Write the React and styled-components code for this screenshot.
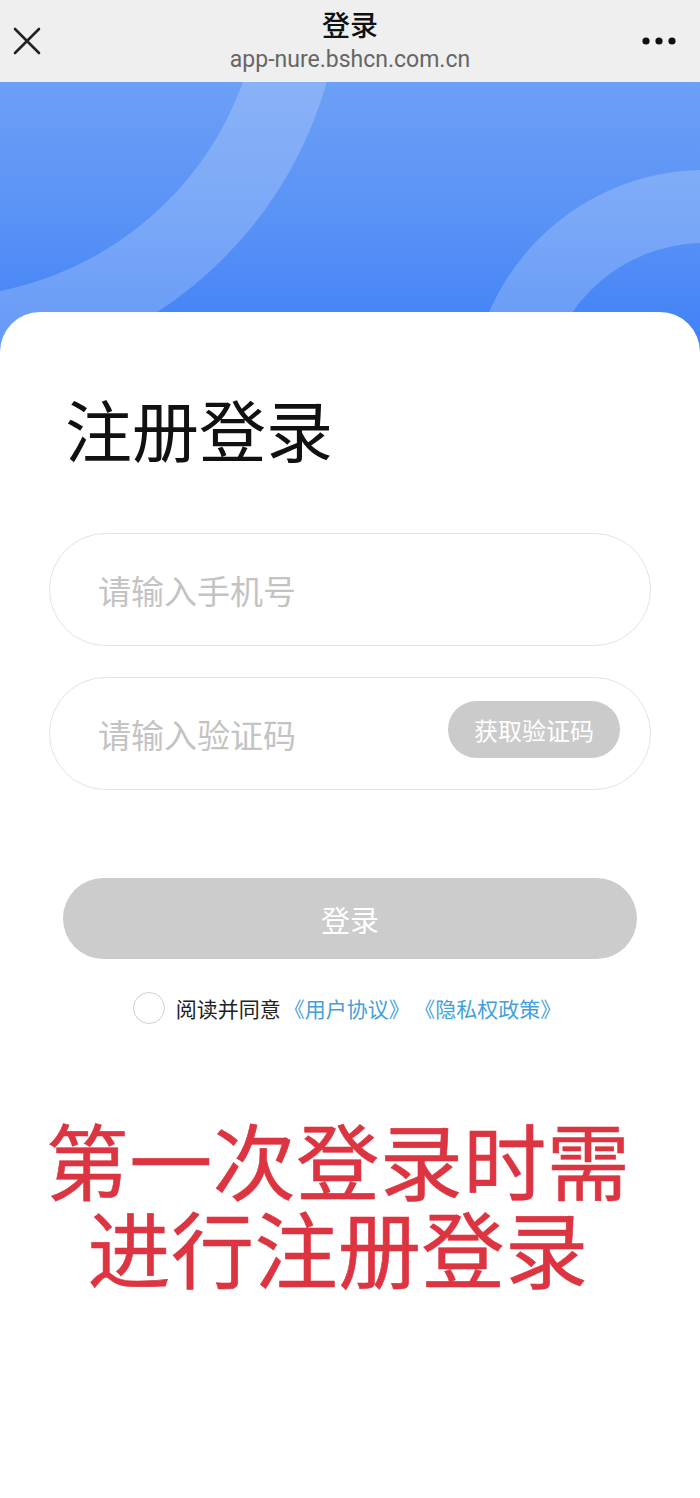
import React, { useState } from 'react'
import styled, { createGlobalStyle } from 'styled-components'

const GlobalStyle = createGlobalStyle`
  html, body {
    margin: 0;
    padding: 0;
    background: #ffffff;
  }
  body {
    font-family: "Noto Sans CJK SC", "Noto Sans", "Liberation Sans", sans-serif;
  }
  * { box-sizing: border-box; }
`

const Page = styled.div`
  width: 700px;
  min-height: 1498px;
  background: #ffffff;
  display: flex;
  flex-direction: column;
`

const NavBar = styled.header`
  height: 82px;
  background: #efefef;
  display: grid;
  grid-template-columns: 80px 1fr 80px;
  align-items: center;
`

const NavButton = styled.button`
  border: 0;
  background: none;
  padding: 0;
  height: 82px;
  display: flex;
  align-items: center;
  justify-content: ${p => (p.$right ? 'flex-end' : 'flex-start')};
  padding-left: ${p => (p.$right ? '0' : '13px')};
  padding-right: ${p => (p.$right ? '24px' : '0')};
  cursor: pointer;
`

const NavTitles = styled.div`
  display: flex;
  flex-direction: column;
  align-items: center;
  line-height: 1;
`

const NavTitle = styled.div`
  font-size: 28px;
  font-weight: 500;
  color: #111;
  margin-top: -2px;
`

const NavUrl = styled.div`
  font-family: "Roboto", "Liberation Sans", sans-serif;
  font-size: 23px;
  color: #666;
  margin-top: 10px;
`

const Hero = styled.div`
  position: relative;
  height: 270px;
  background: linear-gradient(180deg, #6c9ff6 0%, #5a93f6 50%, #3f80f6 100%);
  overflow: hidden;
`

const Ring = styled.div`
  position: absolute;
  border-radius: 50%;
  border-style: solid;
  border-color: rgba(255, 255, 255, 0.2);
`

const Card = styled.main`
  margin-top: -40px;
  position: relative;
  background: #fff;
  border-radius: 40px 40px 0 0;
  padding: 82px 49px 0;
  display: flex;
  flex-direction: column;
  flex: 1;
`

const Heading = styled.h1`
  margin: 0 0 0 16px;
  font-size: 67px;
  font-weight: 400;
  color: #111;
  line-height: 1;
`

const Fields = styled.div`
  margin-top: 72px;
  display: flex;
  flex-direction: column;
  gap: 31px;
`

const Field = styled.div`
  height: 113px;
  border: 1.5px solid #e3e3e3;
  border-radius: 57px;
  display: flex;
  align-items: center;
  padding: 0 30px 0 46px;
`

const Input = styled.input`
  flex: 1;
  min-width: 0;
  border: 0;
  outline: none;
  background: transparent;
  font-family: inherit;
  font-size: 33px;
  color: #333;
  &::placeholder { color: #c3c3c3; }
`

const CodeButton = styled.button`
  height: 57px;
  width: 172px;
  border: 0;
  border-radius: 29px;
  background: #cbcbcb;
  color: #fff;
  font-family: inherit;
  font-size: 24px;
  margin-top: -8px;
`

const LoginButton = styled.button`
  margin: 88px 14px 0;
  height: 81px;
  border: 0;
  border-radius: 41px;
  background: #cccccc;
  color: #fff;
  font-family: inherit;
  font-size: 29px;
`

const Agree = styled.label`
  margin-top: 33px;
  display: flex;
  align-items: center;
  justify-content: center;
  gap: 11px;
  font-size: 21px;
  color: #222;
  margin-left: -6px;
`

const Radio = styled.span`
  width: 32px;
  height: 32px;
  border-radius: 50%;
  border: 1.5px solid #cfcfcf;
  background: ${p => (p.$on ? '#3f80f6' : '#fff')};
`

const Links = styled.span`
  color: #45a0da;
  margin-left: 3px;
`

const Notice = styled.div`
  margin: 90px 0 0 -24px;
  display: flex;
  flex-direction: column;
  align-items: center;
  color: #dc3440;
`

const NoticeLine = styled.div`
  font-size: 83px;
  line-height: 88px;
  font-weight: 400;
  letter-spacing: 0.5px;
  -webkit-text-stroke: 0.6px #dc3440;
`

const CloseIcon = () => (
  <svg width="28" height="28" viewBox="0 0 28 28">
    <path d="M2 2 L26 26 M26 2 L2 26" stroke="#222" strokeWidth="2.6" strokeLinecap="round" />
  </svg>
)

const MoreIcon = () => (
  <svg width="34" height="8" viewBox="0 0 34 8">
    <circle cx="4" cy="4" r="3.6" fill="#111" />
    <circle cx="17" cy="4" r="3.6" fill="#111" />
    <circle cx="30" cy="4" r="3.6" fill="#111" />
  </svg>
)

export default function App() {
  const [agreed, setAgreed] = useState(false)
  return (
    <>
      <GlobalStyle />
      <Page>
        <NavBar>
          <NavButton aria-label="close"><CloseIcon /></NavButton>
          <NavTitles>
            <NavTitle>登录</NavTitle>
            <NavUrl>app-nure.bshcn.com.cn</NavUrl>
          </NavTitles>
          <NavButton $right aria-label="more"><MoreIcon /></NavButton>
        </NavBar>

        <Hero>
          <Ring style={{ left: -468, top: -515, width: 810, height: 810, borderWidth: 80 }} />
          <Ring style={{ left: 470, top: 88, width: 470, height: 470, borderWidth: 73 }} />
        </Hero>

        <Card>
          <Heading>注册登录</Heading>
          <Fields>
            <Field>
              <Input placeholder="请输入手机号" />
            </Field>
            <Field>
              <Input placeholder="请输入验证码" />
              <CodeButton>获取验证码</CodeButton>
            </Field>
          </Fields>
          <LoginButton>登录</LoginButton>
          <Agree onClick={() => setAgreed(!agreed)}>
            <Radio $on={agreed} />
            <span>阅读并同意<Links>《用户协议》 《隐私权政策》</Links></span>
          </Agree>
          <Notice>
            <NoticeLine>第一次登录时需</NoticeLine>
            <NoticeLine>进行注册登录</NoticeLine>
          </Notice>
        </Card>
      </Page>
    </>
  )
}
